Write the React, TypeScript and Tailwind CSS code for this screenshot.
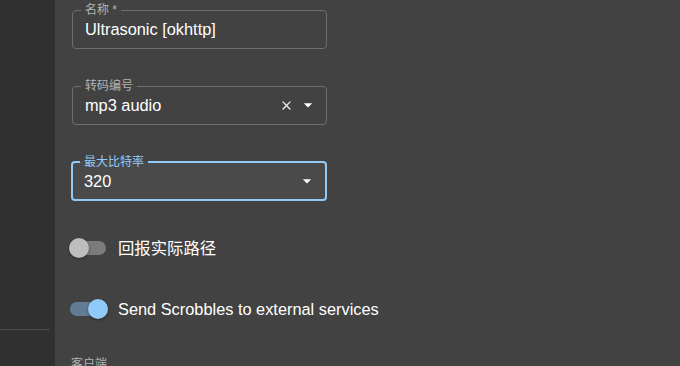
import React from "react";

const font = { fontFamily: '"Liberation Sans", Arial, "Noto Sans CJK SC", sans-serif' };

function Field({
  label,
  value,
  focused,
  clearable,
  select,
}: {
  label: string;
  value: string;
  focused?: boolean;
  clearable?: boolean;
  select?: boolean;
}) {
  return (
    <fieldset
      className={`rounded-[4px] pl-[9px] pr-[14px] ${
        focused ? "w-[256px] border-2 border-[#90caf9] bg-[#4a4a4a] pb-[6px]" : "border border-[#6e6e6e] ml-[1px] w-[255px] pb-[7px]"
      }`}
    >
      <legend
        className={`px-[4px] text-[12px] leading-[12px] ${focused ? "text-[#90caf9] ml-[-2px]" : "text-[#b3b3b3] ml-[-1px]"}`}
      >
        {label}
      </legend>
      <div className={`flex items-center h-[24px] mt-[1px] ${focused ? "pl-[2px]" : "pl-[3px]"}`}>
        <span className="flex-1 text-[16.35px] text-white">{value}</span>
        {clearable && (
          <svg width="15" height="15" viewBox="0 0 24 24" className="mr-[4px]" fill="#ececec">
            <path d="M19 6.41 17.59 5 12 10.59 6.41 5 5 6.41 10.59 12 5 17.59 6.41 19 12 13.41 17.59 19 19 17.59 13.41 12z" />
          </svg>
        )}
        {select && (
          <svg width="20" height="20" viewBox="0 0 24 24" className="mr-[-6px]" fill="#ffffff">
            <path d="M7 10l5 5 5-5z" />
          </svg>
        )}
      </div>
    </fieldset>
  );
}

function Toggle({ on, label }: { on?: boolean; label: string }) {
  return (
    <div className="flex items-center h-[38px]">
      <div className="relative w-[49px] h-[38px] flex items-center ml-[-2px]">
        <div
          className={`absolute left-[1px] w-[36px] h-[14px] rounded-full ${on ? "bg-[#627c95]" : "bg-[#7b7b7b]"}`}
        />
        <div
          className={`absolute w-[20px] h-[20px] rounded-full shadow-[0_1px_3px_rgba(0,0,0,0.4)] ${
            on ? "left-[19px] bg-[#90caf9]" : "left-0 bg-[#bdbdbd]"
          }`}
        />
      </div>
      <span className="text-[16.35px] text-white">{label}</span>
    </div>
  );
}

export default function App() {
  return (
    <div className="flex w-[680px] h-[366px] overflow-hidden bg-[#424242]" style={font}>
      <aside className="w-[55px] shrink-0 bg-[#303030] flex flex-col">
        <div className="flex-1" />
        <div className="h-px bg-[#4a4a4a] w-[50px] mb-[36px]" />
      </aside>
      <main className="flex-1 pl-[16px] pt-[4px] flex flex-col">
        <Field label="名称 *" value="Ultrasonic [okhttp]" />
        <div className="h-[31px] shrink-0" />
        <Field label="转码编号" value="mp3 audio" clearable select />
        <div className="h-[31px] shrink-0" />
        <Field label="最大比特率" value="320" focused select />
        <div className="h-[28px] shrink-0" />
        <Toggle label="回报实际路径" />
        <div className="h-[23px] shrink-0" />
        <Toggle on label="Send Scrobbles to external services" />
        <div className="mt-[29px] text-[12px] leading-[14px] text-[#b3b3b3]">客户端</div>
      </main>
    </div>
  );
}
